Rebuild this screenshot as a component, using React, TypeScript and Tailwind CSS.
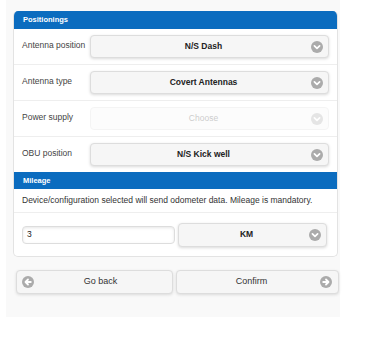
import React from 'react';

function ChevronDisc() {
  return (
    <svg width="12" height="12" viewBox="0 0 12 12" className="shrink-0">
      <circle cx="6" cy="6" r="6" fill="#ababab" />
      <path d="M3.4 4.9 L6 7.4 L8.6 4.9" fill="none" stroke="#fff" strokeWidth="1.7" strokeLinecap="round" strokeLinejoin="round" />
    </svg>
  );
}

function ArrowDisc({ dir }: { dir: 'left' | 'right' }) {
  return (
    <svg width="12" height="12" viewBox="0 0 12 12" className="shrink-0">
      <circle cx="6" cy="6" r="6" fill="#ababab" />
      {dir === 'left' ? (
        <path d="M8.8 6 H3.6 M6 3.5 L3.5 6 L6 8.5" fill="none" stroke="#fff" strokeWidth="1.8" strokeLinecap="round" strokeLinejoin="round" />
      ) : (
        <path d="M3.2 6 H8.4 M6 3.5 L8.5 6 L6 8.5" fill="none" stroke="#fff" strokeWidth="1.8" strokeLinecap="round" strokeLinejoin="round" />
      )}
    </svg>
  );
}

function Select({ value, disabled = false, className = '' }: { value: string; disabled?: boolean; className?: string }) {
  return (
    <div
      className={`relative flex items-center h-[23px] bg-[#f6f6f6] border border-[#dddddd] rounded-[4px] shadow-[0_1px_3px_rgba(0,0,0,0.15)] pl-[12px] pr-[24px] ${
        disabled ? 'opacity-30 shadow-none' : ''
      } ${className}`}
    >
      <span className={`flex-1 text-center text-[8.5px] ${disabled ? 'font-normal text-[#555]' : 'font-bold text-[#222]'}`}>{value}</span>
      <span className="absolute right-[5px] top-1/2 -translate-y-1/2">
        <ChevronDisc />
      </span>
    </div>
  );
}

function FieldRow({ label, value, disabled, last }: { label: string; value: string; disabled?: boolean; last?: boolean }) {
  return (
    <div className={`flex items-start px-[8px] py-[6px] ${last ? '' : 'border-b border-[#eeeeee]'}`}>
      <div className="w-[68px] pt-[4px] text-[8.5px] text-[#444]">{label}</div>
      <Select value={value} disabled={disabled} className="flex-1" />
    </div>
  );
}

export default function App() {
  return (
    <div className="w-[388px] h-[337px] bg-white font-['Liberation_Sans',Arial,sans-serif]">
      <div className="ml-[6px] w-[334px] h-[317px] bg-[#f9f9f9] pt-[11px] pl-[7px]">
        {/* Form card */}
        <div className="w-[325px] bg-white border-x border-b border-[#e3e3e3] rounded-[5px] overflow-hidden">
          <div className="h-[18px] bg-[#0b6cbf] flex items-center px-[9px] text-[7.5px] font-bold text-white">Positionings</div>
          <FieldRow label="Antenna position" value="N/S Dash" />
          <FieldRow label="Antenna type" value="Covert Antennas" />
          <FieldRow label="Power supply" value="Choose" disabled />
          <FieldRow label="OBU position" value="N/S Kick well" last />

          <div className="h-[17px] bg-[#0b6cbf] flex items-center px-[9px] text-[7.5px] font-bold text-white">Mileage</div>
          <div className="h-[24px] flex items-center px-[8px] border-b border-[#eeeeee] text-[8.5px] text-[#333]">
            Device/configuration selected will send odometer data. Mileage is mandatory.
          </div>
          <div className="h-[43px] flex items-center gap-[3px] pl-[8px] pr-[10px]">
            <div className="w-[153px] h-[18px] flex items-center bg-white border border-[#dddddd] rounded-[4px] shadow-[inset_0_1px_3px_rgba(0,0,0,0.1)] px-[4px] text-[8.5px] text-[#222]">
              3
            </div>
            <Select value="KM" className="flex-1 h-[24px]" />
          </div>
        </div>

        {/* Navigation */}
        <div className="mt-[13px] pl-[3px] flex gap-[3px]">
          <div className="relative w-[157px] h-[24px] flex items-center bg-[#f6f6f6] border border-[#dddddd] rounded-[4px] shadow-[0_1px_3px_rgba(0,0,0,0.12)] pl-[24px] pr-[12px]">
            <span className="absolute left-[5px] top-1/2 -translate-y-1/2">
              <ArrowDisc dir="left" />
            </span>
            <span className="flex-1 text-center text-[9px] text-[#333]">Go back</span>
          </div>
          <div className="relative w-[163px] h-[24px] flex items-center bg-[#f6f6f6] border border-[#dddddd] rounded-[4px] shadow-[0_1px_3px_rgba(0,0,0,0.12)] pl-[12px] pr-[24px]">
            <span className="flex-1 text-center text-[9px] text-[#333]">Confirm</span>
            <span className="absolute right-[6px] top-1/2 -translate-y-1/2">
              <ArrowDisc dir="right" />
            </span>
          </div>
        </div>
      </div>
    </div>
  );
}
